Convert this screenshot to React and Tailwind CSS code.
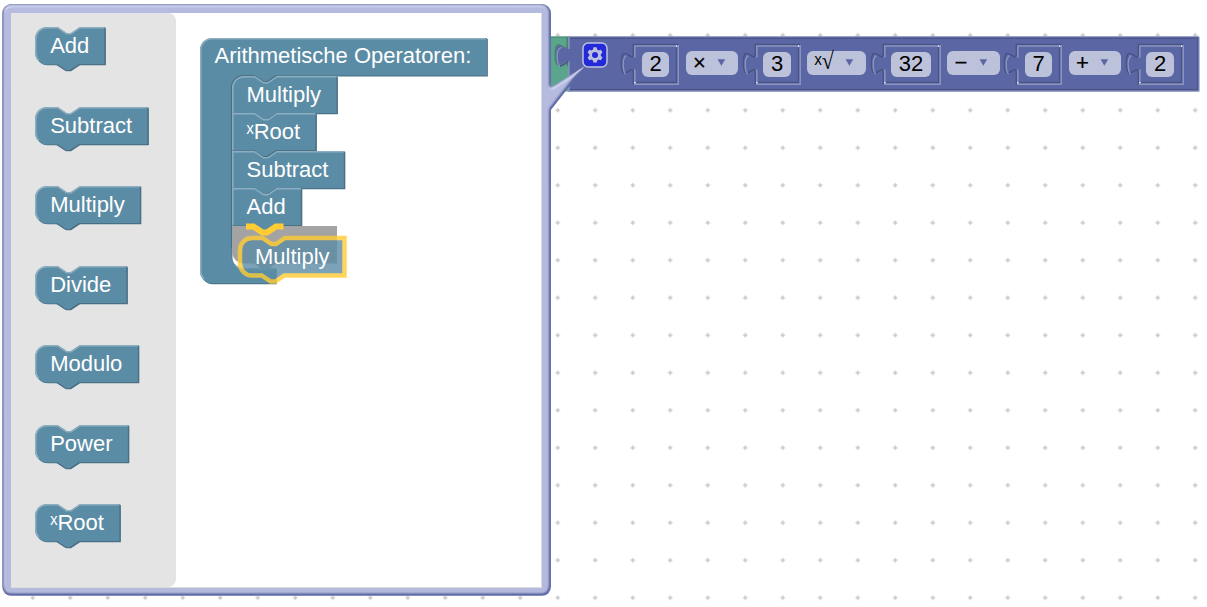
import React from "react";

const SCALE = 1.5;

const STEEL = { fill: "#5b8ca5", light: "#8caec0", dark: "#497084" };
const INDIGO = { fill: "#5b67a5", light: "#8c95c0", dark: "#495284" };

const NOTCH = "H 15 l 6,4 3,0 6,-4";

function outline(w, h, top, bottom) {
  const start = top ? "M 0,8 A 8,8 0 0 1 8,0" : "M 0,0";
  const end = bottom ? `H 8 a 8,8 0 0 1 -8,-8 Z` : "H 0 Z";
  return `${start} ${NOTCH} H ${w} V ${h} H 29.5 l -6,4 -3,0 -6,-4 ${end}`;
}

function highlight(w, h, top, bottom) {
  const left = bottom ? `M 2.7,${h - 2.7} A 7.5,7.5 0 0 1 0.5,${h - 8}` : `M 0.5,${h - 0.5}`;
  const corner = top ? "V 8 A 7.5,7.5 0 0 1 8,0.5" : "V 0.5";
  return `${left} ${corner} H 15 l 6,4 3,0 6,-4 H ${w - 0.5}`;
}

function Block({ label, width, top, bottom, marker, dragging }) {
  const w = width / SCALE;
  const h = 25;
  const path = outline(w, h, top, bottom);
  return (
    <div className="relative h-[37.5px]" style={{ width }}>
      <svg
        className={dragging ? "absolute inset-0 overflow-visible opacity-80" : "absolute inset-0 overflow-visible"}
        width={width}
        height="38"
      >
        <g transform="scale(1.5)">
          {marker ? (
            <path d={path} fill="#a3a3a3" />
          ) : (
            <>
              {!dragging && <path d={path} fill={STEEL.dark} transform="translate(0.5,0.5)" />}
              <path
                d={path}
                fill={STEEL.fill}
                stroke={dragging ? "#fc3" : "none"}
                strokeWidth={dragging ? 3 : 0}
              />
              {!dragging && (
                <>
                  <path
                    d={`M ${w},1 V ${h} H 29.5 l -6,4 -3,0 -6,-4`}
                    fill="none"
                    stroke={STEEL.dark}
                    strokeWidth="0.8"
                  />
                  <path d={highlight(w, h, top, bottom)} fill="none" stroke={STEEL.light} strokeWidth="1" />
                </>
              )}
            </>
          )}
        </g>
      </svg>
      <span className="relative block whitespace-nowrap pl-[15px] leading-[38px]">{label}</span>
    </div>
  );
}

const PALETTE = [
  ["Add", 70],
  ["Subtract", 113],
  ["Multiply", 105.5],
  ["Divide", 92],
  ["Modulo", 103.5],
  ["Power", 93.5],
  ["ˣRoot", 85],
];

const STACK = [
  ["Multiply", 105],
  ["ˣRoot", 84],
  ["Subtract", 112.5],
  ["Add", 69.5],
];

const CONTAINER =
  "M 0,8 A 8,8 0 0 1 8,0 H 191.3 V 25 H 51 l -6,4 -3,0 -6,-4 h -7 a 8,8 0 0 0 -8,8 V 145.5 a 8,8 0 0 0 8,8 H 50.5 V 163.5 H 8 a 8,8 0 0 1 -8,-8 Z";

function Container() {
  return (
    <div className="relative h-[246px] w-[287px]">
      <svg className="absolute inset-0 overflow-visible" width="287" height="246">
        <g transform="scale(1.5)">
          <path d={CONTAINER} fill={STEEL.dark} transform="translate(0.6,0.6)" />
          <path d={CONTAINER} fill={STEEL.fill} />
          <path
            d="M 21,140 V 33 a 8,8 0 0 1 8,-8 h 7 l 6,4 3,0 6,-4"
            fill="none"
            stroke={STEEL.dark}
            strokeWidth="0.8"
          />
          <path
            d="M 2.7,160.8 A 7.5,7.5 0 0 1 0.5,155.5 V 8 A 7.5,7.5 0 0 1 8,0.5 H 190.5 M 23.3,151.2 A 8.5,8.5 0 0 0 29,154 H 50"
            fill="none"
            stroke={STEEL.light}
            strokeWidth="1"
          />
        </g>
      </svg>
      <div className="relative h-[37.5px] whitespace-nowrap pl-[15px] leading-[35.5px]">Arithmetische Operatoren:</div>
      <div className="relative mt-[0.5px] flex flex-col pl-[32px]">
        {STACK.map(([label, width], i) => (
          <Block key={label} label={label} width={width} top={i === 0} />
        ))}
        <Block label="" width={105} bottom marker />
        <svg className="absolute left-[31.5px] top-[150px] overflow-visible" width="60" height="12">
          <path d="M 15,0.5 h 7.5 l 9,6 h 4.5 l 9,-6 h 7.5" fill="none" stroke="#fc3" strokeWidth="6" />
        </svg>
      </div>
    </div>
  );
}

function Bubble() {
  return (
    <div className="absolute left-0 top-0 h-[607px] w-[620px]">
      <svg className="absolute inset-0" width="620" height="607">
        <defs>
          <filter id="emboss" x="-5%" y="-5%" width="110%" height="110%">
            <feGaussianBlur in="SourceAlpha" stdDeviation="1" result="blur" />
            <feSpecularLighting in="blur" surfaceScale="1" specularConstant="0.5" specularExponent="10" lightingColor="white" result="specOut">
              <fePointLight x="-5000" y="-10000" z="20000" />
            </feSpecularLighting>
            <feComposite in="specOut" in2="SourceAlpha" operator="in" result="specOut" />
            <feComposite in="SourceGraphic" in2="specOut" operator="arithmetic" k1="0" k2="1" k3="1" k4="0" />
          </filter>
        </defs>
        <g transform="scale(1.5)" filter="url(#emboss)">
          <path d="M 362,62 Q 368,57.5 390,44 Q 377,61 362,80 Z" fill={INDIGO.fill} />
          <rect x="1.5" y="2.7" width="365.8" height="394.5" rx="6" fill={INDIGO.fill} />
        </g>
      </svg>
      <div className="relative ml-[11px] w-[531px] pt-[13px]">
        <div className="flex h-[575px] border-b border-r border-[#ddd] bg-white text-[22px] text-white">
          <div className="flex w-[164.5px] shrink-0 flex-col gap-[42px] rounded-r-lg bg-[#e4e4e4] pl-[24.2px] pt-[14.4px]">
            {PALETTE.map(([label, width]) => (
              <Block key={label} label={label} width={width} top bottom />
            ))}
          </div>
          <div className="relative pl-[24px] pt-[24.5px]">
            <Container />
            <div className="absolute left-[64.5px] top-[224.5px]">
              <Block label="Multiply" width={104.5} top bottom dragging />
            </div>
          </div>
        </div>
      </div>
    </div>
  );
}

const TAB = "c 0,-15 -12,12 -12,-11.25 s 12,3.75 12,-11.25";

function NumberInput({ value, width }) {
  return (
    <div className="relative flex h-[41px] items-center justify-center pl-[10px]" style={{ width: width + 12 }}>
      <svg className="absolute inset-0 overflow-visible" width={width + 12} height="41" fill="none" strokeWidth="1.5">
        <path d={`M 11.4,40.5 V 30.5 ${TAB} V 0.5 H ${width + 11}`} stroke={INDIGO.dark} />
        <path d={`M 12.8,40 V 25.5 m 0,-12 V 2 H ${width + 10}`} stroke={INDIGO.light} />
        <path d="M 4.5,11.6 C 2,13 1.2,15 1.2,19.5 C 1.2,25 1.6,28.5 3.6,30.2" stroke={INDIGO.light} strokeWidth="1.3" />
        <path d={`M ${width + 9.6},3 V 38.6 H 14`} stroke={INDIGO.dark} />
        <path d={`M ${width + 11.2},1 V 40.2 H 12`} stroke={INDIGO.light} />
        <rect x="12.2" y="38" width="1.3" height="1.3" fill="#fff" />
        <rect x={width + 9} y="1.5" width="1.3" height="1.3" fill="#fff" />
      </svg>
      <span
        className="relative mt-px flex h-[25px] items-center justify-center rounded-md bg-[#bdc2db] pb-[2px] text-[22px] leading-none text-black"
        style={{ width: width - 17.5 }}
      >
        {value}
      </span>
    </div>
  );
}

function Operator({ symbol, width }) {
  return (
    <div
      className="mb-[2px] ml-[6.5px] mr-[5.5px] flex h-6 items-center justify-between rounded-md bg-[#bdc2db] pl-[7.5px] pr-[12px] text-[22px] leading-none text-black"
      style={{ width }}
    >
      <span className="whitespace-nowrap [-webkit-text-stroke:0.2px_black]">{symbol}</span>
      <svg className="mb-[2px]" width="9" height="7">
        <path d="M 0.5,0.3 H 8.2 L 4.35,6.8 Z" fill={INDIGO.fill} />
      </svg>
    </div>
  );
}

function RootSymbol() {
  return (
    <span className="flex items-center [-webkit-text-stroke:0]">
      <span>ˣ</span>
      <span className="inline-block -translate-y-[2px] scale-y-110 font-['Liberation_Serif',serif]">√</span>
    </span>
  );
}

function Gear() {
  return (
    <svg className="overflow-visible opacity-60" width="24" height="24" viewBox="0 0 16 16">
      <rect width="16" height="16" rx="3.5" fill="#00f" stroke="#fff" strokeWidth="1" />
      <path
        fill="#fff"
        d="m4.203,7.296 0,1.368 -0.92,0.677 -0.11,0.41 0.9,1.559 0.41,0.11 1.043,-0.457 1.187,0.683 0.127,1.134 0.3,0.3 1.8,0 0.3,-0.299 0.127,-1.138 1.185,-0.682 1.046,0.458 0.409,-0.11 0.9,-1.559 -0.11,-0.41 -0.92,-0.677 0,-1.366 0.92,-0.677 0.11,-0.41 -0.9,-1.559 -0.409,-0.109 -1.046,0.458 -1.185,-0.682 -0.127,-1.138 -0.3,-0.299 -1.8,0 -0.3,0.3 -0.126,1.135 -1.187,0.682 -1.043,-0.457 -0.41,0.11 -0.899,1.559 0.108,0.409z"
      />
      <circle cx="8" cy="8" r="2" fill="#00f" />
    </svg>
  );
}

function Formula() {
  return (
    <div className="absolute left-[540px] top-[36px] h-[55px] w-[660px]">
      <svg className="absolute inset-0 overflow-visible" width="660" height="56" fill="none">
        <rect x="0" y="0.5" width="30" height="55" fill="#5ba58c" />
        <path d="M 0,1.2 H 28" stroke="#4d9179" strokeWidth="1.2" />
        <path d={`M 27.4,30 ${TAB} V 1`} stroke="#49846f" strokeWidth="2" />
        <path d={`M 28.2,0.5 H 659 V 55.5 H 28.2 V 30.5 ${TAB} Z`} fill={INDIGO.fill} />
        <path d="M 28.2,1 H 659" stroke={INDIGO.light} strokeWidth="1" />
        <path d="M 29,2.2 H 657.8 V 53.6 H 29" stroke={INDIGO.dark} strokeWidth="1.3" />
        <path d="M 659,1 V 55 H 28.5" stroke={INDIGO.light} strokeWidth="1.2" />
        <path d="M 28.9,0.5 V 13 m 0,12.5 V 55.5" stroke={INDIGO.light} strokeWidth="1.5" />
        <path d="M 21.5,11.3 C 18,12.5 17.2,15 17.2,19.5 C 17.2,25 17.6,28.5 19.6,30" stroke={INDIGO.light} strokeWidth="1.3" />
        <path d="M 20,30 Q 23,29.5 28,25.5" stroke={INDIGO.dark} strokeWidth="1.5" />
      </svg>
      <div className="relative flex h-[55px] items-center pl-[43px]">
        <div className="-mt-[16.4px] mr-[15px] flex">
          <Gear />
        </div>
        <div className="mt-[1.5px] flex items-center">
          <NumberInput value="2" width={45} />
          <Operator symbol="×" width={52.5} />
          <NumberInput value="3" width={45} />
          <Operator symbol={<RootSymbol />} width={59} />
          <NumberInput value="32" width={57} />
          <Operator symbol="−" width={52.5} />
          <NumberInput value="7" width={45} />
          <Operator symbol="+" width={52.5} />
          <NumberInput value="2" width={45} />
        </div>
      </div>
    </div>
  );
}

export default function App() {
  return (
    <div className="relative h-[607px] w-[1207px] overflow-hidden bg-white font-['Liberation_Sans',sans-serif]">
      <svg className="absolute inset-0" width="1207" height="607">
        <defs>
          <pattern id="grid" width="37.5" height="37.5" patternUnits="userSpaceOnUse" x="14" y="16.5">
            <path d="M 16.5,18.75 h 4.5 M 18.75,16.5 v 4.5" stroke="#c8c8c8" strokeWidth="1.5" />
          </pattern>
        </defs>
        <rect width="1207" height="607" fill="url(#grid)" />
      </svg>
      <Formula />
      <Bubble />
    </div>
  );
}
